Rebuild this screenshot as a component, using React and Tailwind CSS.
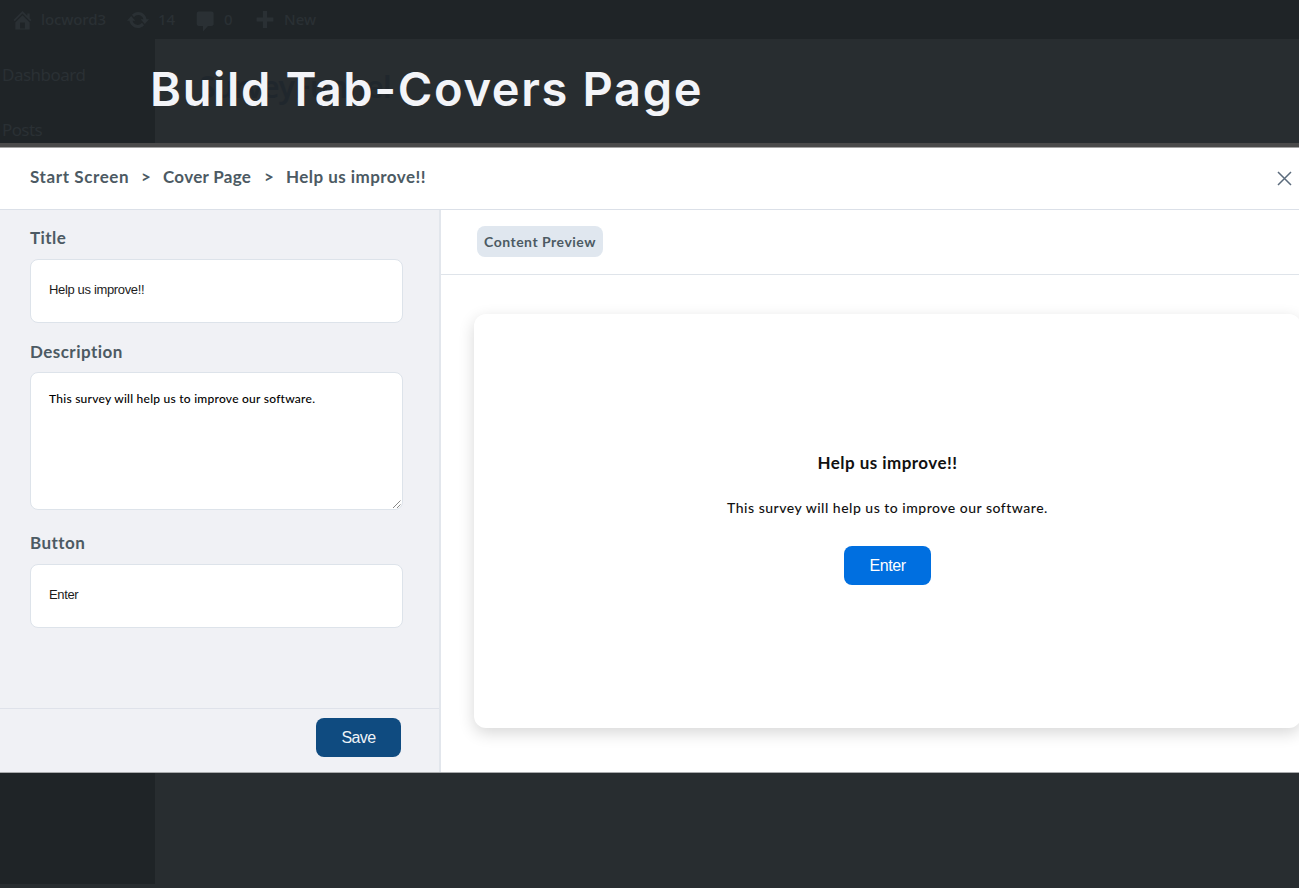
import React from "react";

const LABEL =
  "font-['Lato'] text-[17px] leading-[22px] font-bold tracking-[0.45px] text-[#4c5a63]";

const INPUT =
  "flex h-[64px] w-[373px] items-center rounded-[8px] border border-[#dde3ea] bg-white pl-[18px] pb-[2px] font-['Liberation_Sans'] text-[13px] tracking-[-0.35px] text-[#1c1c1c]";

function TopBar() {
  return (
    <div className="flex h-[39px] w-full shrink-0 items-center bg-[#1f2427] pl-[10px] font-['Noto_Sans',sans-serif] text-[15px] font-medium text-[#2a3034]">
      <svg width="25" height="24" viewBox="0 0 20 20" fill="currentColor">
        <path d="M16 8.500l1.530 1.530-1.060 1.060L10 4.600l-6.470 6.490-1.060-1.060L10 2.500l4 4v-2h2v4zm-6-2.460l6 5.990V18H4v-5.970zM12 17v-5H8v5h4z" />
      </svg>
      <span className="ml-[6px] w-[67px] tracking-[-0.1px]">locword3</span>
      <svg className="ml-[18px]" width="24" height="24" viewBox="0 0 20 20" fill="currentColor">
        <path d="M10.200 3.280c3.530 0 6.430 2.610 6.920 6h2.080l-3.500 4-3.500-4h2.320c-.45-1.970-2.210-3.450-4.320-3.450-1.450 0-2.730.71-3.540 1.780L4.950 5.660C6.230 4.200 8.110 3.280 10.200 3.280zm-.4 13.440c-3.520 0-6.430-2.610-6.920-6H.8l3.500-4c1.170 1.330 2.330 2.670 3.500 4H5.480c.45 1.970 2.210 3.450 4.320 3.450 1.450 0 2.730-.71 3.540-1.780l1.710 1.950c-1.280 1.460-3.150 2.380-5.250 2.380z" />
      </svg>
      <span className="ml-[8px] w-[18px]">14</span>
      <svg className="ml-[17px] mt-[3px]" width="25" height="25" viewBox="0 0 20 20" fill="currentColor">
        <path d="M4.500 2h10.500c.8 0 1.500.7 1.500 1.500v8.500c0 .8-.7 1.500-1.500 1.500h-3l-4 4.500v-4.500H4.500c-.8 0-1.500-.7-1.500-1.500V3.500C3 2.700 3.700 2 4.500 2z" />
      </svg>
      <span className="ml-[6px] w-[9px]">0</span>
      <svg className="ml-[21px]" width="22" height="21" viewBox="0 0 20 20" fill="currentColor">
        <path d="M8 2h4v6h6v4h-6v6H8v-6H2V8h6z" />
      </svg>
      <span className="ml-[8px]">New</span>
    </div>
  );
}

function Field({ label, children, className }) {
  return (
    <div className={className}>
      <div className={LABEL}>{label}</div>
      {children}
    </div>
  );
}

export default function App() {
  return (
    <div className="flex h-[888px] w-[1299px] flex-col overflow-hidden bg-[#282d30]">
      <header className="relative flex h-[143px] shrink-0 flex-col">
        <TopBar />
        <div className="flex flex-1">
          <nav className="flex w-[155px] flex-col bg-[#1f2427] pl-[2px] pt-[24px] font-['Noto_Sans',sans-serif] text-[17px] leading-[24px] text-[#2a3034]">
            <span className="tracking-[-0.5px]">Dashboard</span>
            <span className="mt-[31px] tracking-[-0.6px]">Posts</span>
          </nav>
          <div className="flex-1 pl-[44px] pt-[26px] font-['Noto_Sans',sans-serif] text-[30px] leading-[44px] font-semibold tracking-[-0.5px] text-[#20272d]">
            SurveyFunnel
          </div>
        </div>
        <h1 className="absolute left-[150px] top-[59px] whitespace-nowrap font-['Inter'] text-[47px] leading-[60px] font-semibold tracking-[1.65px] text-[#f3f4f8]">
          Build Tab-Covers Page
        </h1>
      </header>

      <div className="h-[5px] shrink-0 border-b border-[#a3a3a3] bg-[#4a4a4a]" />

      <main className="flex h-[624px] shrink-0 flex-col bg-white">
        <div className="flex h-[62px] shrink-0 items-center justify-between border-b border-[#dbe0e8] pl-[30px] pr-[7px]">
          <div className={"flex items-center pb-[3px] " + LABEL}>
            <span className="w-[111px] tracking-[0.6px]">Start Screen</span>
            <span className="w-[22px]">&gt;</span>
            <span className="w-[101px] tracking-[0.3px]">Cover Page</span>
            <span className="w-[22px]">&gt;</span>
            <span>Help us improve!!</span>
          </div>
          <svg width="15" height="15" viewBox="0 0 15 15" fill="none" stroke="#5b6b7c" strokeWidth="1.5">
            <path d="M1 1l13 13M14 1L1 14" />
          </svg>
        </div>

        <div className="flex min-h-0 flex-1">
          <aside className="flex w-[441px] shrink-0 flex-col border-r-2 border-[#e2e6ec] bg-[#f0f1f5]">
            <div className="flex-1 pl-[30px] pt-[17px]">
              <Field label="Title">
                <div className={"mt-[10px] " + INPUT}>Help us improve!!</div>
              </Field>
              <Field label="Description" className="mt-[18px]">
                <div className="mt-[9px] flex h-[138px] w-[373px] items-end justify-between rounded-[8px] border border-[#dde3ea] bg-white pl-[18px]">
                  <p className="self-start pt-[17px] font-['Lato'] text-[12px] leading-[18px] font-medium tracking-[0.25px] text-black">
                    This survey will help us to improve our software.
                  </p>
                  <svg width="10" height="10" viewBox="0 0 10 10" stroke="#888" strokeWidth="1">
                    <path d="M1 9L8.500 1.500M5 9L8.500 5.500" />
                  </svg>
                </div>
              </Field>
              <Field label="Button" className="mt-[22px]">
                <div className={"mt-[10px] " + INPUT}>Enter</div>
              </Field>
            </div>
            <div className="flex h-[64px] shrink-0 items-start justify-end border-t border-[#dfe2ea] pr-[38px] pt-[9px]">
              <button className="h-[39px] w-[85px] rounded-[8px] bg-[#0f4b80] font-['Liberation_Sans'] text-[16px] tracking-[-0.6px] text-[#eef3f8]">
                Save
              </button>
            </div>
          </aside>

          <section className="flex min-w-0 flex-1 flex-col overflow-hidden">
            <div className="flex h-[65px] shrink-0 items-start border-b border-[#dfe4ea] pl-[36px] pt-[16px]">
              <div className="flex h-[31px] w-[126px] items-center justify-center rounded-[8px] bg-[#e0e7ef] font-['Lato'] text-[14px] font-bold tracking-[0.5px] text-[#4c5a63]">
                Content Preview
              </div>
            </div>
            <div className="flex-1 pl-[33px] pt-[39px]">
              <div className="flex h-[414px] w-[827px] flex-col items-center rounded-[12px] bg-white pt-[137px] shadow-[0_5px_16px_rgba(0,0,0,0.16)]">
                <h2 className="font-['Lato'] text-[17px] leading-[24px] font-bold tracking-[0.45px] text-[#111]">
                  Help us improve!!
                </h2>
                <p className="mt-[22px] font-['Lato'] text-[14px] leading-[22px] font-medium tracking-[0.5px] text-[#111]">
                  This survey will help us to improve our software.
                </p>
                <button className="mt-[27px] h-[39px] w-[87px] rounded-[8px] bg-[#006fe0] font-['Liberation_Sans'] text-[16px] tracking-[-0.4px] text-white">
                  Enter
                </button>
              </div>
            </div>
          </section>
        </div>
      </main>

      <div className="h-px shrink-0 bg-[#a9abad]" />
      <div className="h-[111px] w-[155px] shrink-0 bg-[#1f2427]" />
    </div>
  );
}
